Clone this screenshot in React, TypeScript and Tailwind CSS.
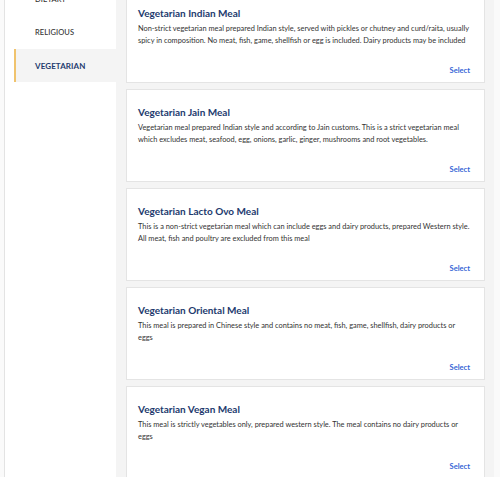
import React from "react"

const meals = [
  {
    title: "Vegetarian Indian Meal",
    lines: [
      "Non-strict vegetarian meal prepared Indian style, served with pickles or chutney and curd/raita, usually",
      "spicy in composition. No meat, fish, game, shellfish or egg is included. Dairy products may be included",
    ],
  },
  {
    title: "Vegetarian Jain Meal",
    lines: [
      "Vegetarian meal prepared Indian style and according to Jain customs. This is a strict vegetarian meal",
      "which excludes meat, seafood, egg, onions, garlic, ginger, mushrooms and root vegetables.",
    ],
  },
  {
    title: "Vegetarian Lacto Ovo Meal",
    lines: [
      "This is a non-strict vegetarian meal which can include eggs and dairy products, prepared Western style.",
      "All meat, fish and poultry are excluded from this meal",
    ],
  },
  {
    title: "Vegetarian Oriental Meal",
    lines: [
      "This meal is prepared in Chinese style and contains no meat, fish, game, shellfish, dairy products or",
      "eggs",
    ],
  },
  {
    title: "Vegetarian Vegan Meal",
    lines: [
      "This meal is strictly vegetables only, prepared western style. The meal contains no dairy products or",
      "eggs",
    ],
  },
]

const categories = ["DIETARY", "RELIGIOUS", "VEGETARIAN"]

export default function App() {
  return (
    <div
      className="w-[500px] h-[477px] overflow-hidden flex bg-[#fafafa]"
      style={{ fontFamily: "Lato, 'Liberation Sans', sans-serif" }}
    >
      <div className="w-[4px] shrink-0" />
      <aside className="w-[112px] shrink-0 bg-white border-l border-[#e3e3e3]">
        <ul className="-mt-[17px] pl-[9px]">
          {categories.map((c) => {
            const active = c === "VEGETARIAN"
            return (
              <li
                key={c}
                className={`h-[33px] flex items-center pl-[19px] tracking-[0.1px] ${
                  active
                    ? "bg-[#f4f4f4] border-l-2 border-[#f0c36d] font-bold text-[8px] text-[#233a6e]"
                    : "border-l-2 border-transparent text-[7.5px] text-[#333] font-medium"
                }`}
              >
                {c}
              </li>
            )
          })}
        </ul>
      </aside>
      <main className="w-[378px] shrink-0 bg-[#f4f4f4] pl-[10px] pr-[9px]">
        <div className="-mt-[10px] flex flex-col gap-[6px]">
          {meals.map((m) => (
            <div
              key={m.title}
              className="h-[93px] bg-white border border-[#e4e4e4] flex flex-col pl-[11px] pr-[13px] pt-[15px] pb-[5px]"
            >
              <h3 className="text-[10px] leading-[14px] font-bold text-[#233a6e]">{m.title}</h3>
              <p className="mt-[3px] text-[7.4px] leading-[12px] text-[#333] whitespace-nowrap">
                {m.lines.map((l) => (
                  <span key={l} className="block">
                    {l}
                  </span>
                ))}
              </p>
              <div className="mt-auto pr-[1px] text-right text-[7.5px] leading-[12px] font-bold text-[#3566d6]">
                Select
              </div>
            </div>
          ))}
        </div>
      </main>
    </div>
  )
}
